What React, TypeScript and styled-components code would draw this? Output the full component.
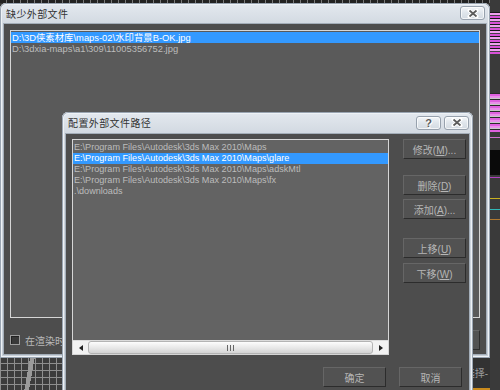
import React from 'react';
import styled, { createGlobalStyle } from 'styled-components';

const GlobalStyle = createGlobalStyle`
	html, body {
		margin: 0;
		padding: 0;
	}
	body {
		width: 500px;
		height: 390px;
		overflow: hidden;
		background: #2e2e2e;
		font-family: 'Liberation Sans', 'Noto Sans CJK SC', sans-serif;
	}
`;

const Desktop = styled.div`
	position: relative;
	width: 500px;
	height: 390px;
	overflow: hidden;
	display: grid;
	grid-template-columns: 1fr 10px;
`;

const Viewport = styled.div`
	display: flex;
	flex-direction: column;
	background: #383838;
`;

const Ruler = styled.div`
	height: 3px;
	background: repeating-linear-gradient(90deg, #222 0 6px, #7a7a7a 6px 7px);
`;

const Scene = styled.div`
	flex: 1;
	display: flex;
	align-items: flex-end;
`;

const GridPatch = styled.div`
	width: 70px;
	height: 34px;
	background-color: #3c3c3c;
	background-image:
		linear-gradient(100deg, transparent 40%, #9a9a9a 40% 46%, transparent 46%),
		linear-gradient(#8e8e8e 1px, transparent 1px),
		linear-gradient(90deg, #8e8e8e 1px, transparent 1px);
	background-size: 100% 100%, 7px 7px, 7px 7px;
`;

const StatusArea = styled.div`
	flex: 1;
	height: 34px;
	box-sizing: border-box;
	display: flex;
	align-items: center;
	justify-content: flex-end;
	padding-right: 2px;
	background: #323232;
	border-bottom: 2px solid #c98a1c;
	font-size: 10px;
	color: #9a9a9a;
`;

const SidePanel = styled.div`
	background:
		linear-gradient(#d070d0 0 0) 0 137px / 10px 1px no-repeat,
		linear-gradient(#b040c0 0 0) 0 177px / 10px 1px no-repeat,
		linear-gradient(#c8b020 0 0) 0 198px / 10px 1px no-repeat,
		linear-gradient(#30b8b8 0 0) 0 209px / 10px 1px no-repeat,
		linear-gradient(#b07830 0 0) 0 219px / 10px 1px no-repeat,
		linear-gradient(#0a0a0a 0 0) 0 150px / 10px 25px no-repeat,
		repeating-linear-gradient(0deg, #e060e0 0 2px, #2a2a2a 2px 3px, #c8c8c8 3px 4px, #e890e8 4px 6px) 0 93px / 10px 39px no-repeat,
		repeating-linear-gradient(0deg, #d850d8 0 2px, #444 2px 3px, #f0a0f0 3px 5px, #181818 5px 6px) 0 12px / 10px 42px no-repeat,
		#3a3a3a;
`;

const Window = styled.div<{ $x: number; $y: number; $w: number; $h: number }>`
	position: absolute;
	left: ${(p) => p.$x}px;
	top: ${(p) => p.$y}px;
	width: ${(p) => p.$w}px;
	height: ${(p) => p.$h}px;
	box-sizing: border-box;
	display: flex;
	flex-direction: column;
	padding: 0 3px 3px;
	border-radius: 6px 6px 0 0;
	background: linear-gradient(#e4e9ef, #d3dae2 20px, #c6ced7);
	box-shadow: inset 0 0 0 1px #9aa5b2, inset 0 0 0 2px #eef2f6;
`;

const TitleBar = styled.div<{ $h: number }>`
	height: ${(p) => p.$h}px;
	flex-shrink: 0;
	display: flex;
	align-items: center;
	justify-content: space-between;
	padding-left: 3px;
`;

const TitleText = styled.span`
	font-size: 10px;
	letter-spacing: 0.4px;
	color: #333;
`;

const TitleButtons = styled.div<{ $right: number }>`
	display: flex;
	gap: 3px;
	margin-right: ${(p) => p.$right}px;
`;

const TitleButton = styled.div`
	width: 25px;
	height: 14px;
	box-sizing: border-box;
	display: flex;
	align-items: center;
	justify-content: center;
	border: 1px solid #97a1ad;
	border-radius: 3px;
	background: linear-gradient(#f3f6f9, #dfe5eb 50%, #d3dae2);
	box-shadow: inset 0 0 0 1px rgba(255, 255, 255, 0.7);
	font: bold 11px 'Liberation Sans', sans-serif;
	color: #5a5a5a;
	text-shadow: 0 0 1px #fff, 1px 1px 0 #fff;
`;

const DialogBody = styled.div<{ $pad: string }>`
	flex: 1;
	display: flex;
	flex-direction: column;
	padding: ${(p) => p.$pad};
	background: #4d4d4d;
	box-shadow: inset 0 0 0 1px #a3adb8;
`;

const ListBox = styled.div<{ $w: number; $h: number; $bg: string; $font: number }>`
	width: ${(p) => p.$w}px;
	height: ${(p) => p.$h}px;
	box-sizing: border-box;
	flex-shrink: 0;
	display: flex;
	flex-direction: column;
	border: 1px solid #d6d6d6;
	background: ${(p) => p.$bg};
	font-size: ${(p) => p.$font}px;
	overflow: hidden;
`;

const Rows = styled.div<{ $top: number }>`
	flex: 1;
	padding-top: ${(p) => p.$top}px;
`;

const ListRow = styled.div<{ $selected?: boolean }>`
	height: 11px;
	line-height: 11px;
	padding-left: 1px;
	white-space: nowrap;
	color: ${(p) => (p.$selected ? '#ffffff' : '#bcbcbc')};
	background: ${(p) => (p.$selected ? '#3399ff' : 'transparent')};
`;

const HScroll = styled.div`
	height: 13px;
	flex-shrink: 0;
	display: flex;
	background: #f2f2f2;
	border-top: 1px solid #dcdcdc;
`;

const ScrollArrow = styled.div`
	width: 15px;
	display: flex;
	align-items: center;
	justify-content: center;
`;

const ScrollThumb = styled.div`
	flex: 1;
	box-sizing: border-box;
	display: flex;
	align-items: center;
	justify-content: center;
	border: 1px solid #b4b4b4;
	border-radius: 3px;
	background: linear-gradient(#fdfdfd, #e9e9e9 50%, #d4d4d4);
`;

const Footer = styled.div`
	height: 20px;
	margin-top: 12px;
	display: flex;
	align-items: center;
	justify-content: space-between;
`;

const CheckLabel = styled.label`
	display: flex;
	align-items: center;
	gap: 5px;
	font-size: 10px;
	color: #b8b8b8;
	white-space: nowrap;
`;

const CheckBox = styled.span`
	width: 10px;
	height: 10px;
	box-sizing: border-box;
	border: 1px solid #9d9d9d;
	background: #383838;
	box-shadow: inset 1px 1px 0 #222;
`;

const MainRow = styled.div`
	display: flex;
	gap: 14px;
`;

const ButtonColumn = styled.div`
	width: 62px;
	display: flex;
	flex-direction: column;
`;

const Button = styled.button<{ $top?: number }>`
	width: 63px;
	height: 20px;
	margin: ${(p) => p.$top ?? 0}px 0 0;
	padding: 0;
	box-sizing: border-box;
	border: 1px solid;
	border-color: #666 #2c2c2c #2c2c2c #666;
	background: #525252;
	color: #b6b6b6;
	font-family: 'Liberation Sans', 'Noto Sans CJK SC', sans-serif;
	font-size: 10px;
`;

const Key = styled.span`
	text-decoration: underline;
`;

const BottomRow = styled.div`
	display: flex;
	justify-content: flex-end;
	gap: 13px;
	margin-top: 12px;
	padding-right: 3px;
`;

const CloseGlyph = () => (
	<svg width="12" height="9" viewBox="0 0 12 9">
		<path d="M2.5 1.5 L9.5 7.5 M9.5 1.5 L2.5 7.5" stroke="#fff" strokeWidth="4" strokeLinecap="round" />
		<path d="M2.5 1.5 L9.5 7.5 M9.5 1.5 L2.5 7.5" stroke="#5c5c5c" strokeWidth="1.8" />
	</svg>
);

const Arrow = ({ dir }: { dir: 'left' | 'right' }) => (
	<svg width="4" height="6" viewBox="0 0 4 6">
		<path d={dir === 'left' ? 'M4 0 L0 3 L4 6 Z' : 'M0 0 L4 3 L0 6 Z'} fill="#222" />
	</svg>
);

const Grip = () => (
	<svg width="7" height="6" viewBox="0 0 7 6">
		<path d="M0.5 0 V6 M3.5 0 V6 M6.5 0 V6" stroke="#666" strokeWidth="1" />
	</svg>
);

const missingFiles = [
	{ text: 'D:\\3D侠素材库\\maps-02\\水印背景B-OK.jpg', selected: true },
	{ text: 'D:\\3dxia-maps\\a1\\309\\11005356752.jpg', selected: false },
];

const mapPaths = [
	{ text: 'E:\\Program Files\\Autodesk\\3ds Max 2010\\Maps', selected: false },
	{ text: 'E:\\Program Files\\Autodesk\\3ds Max 2010\\Maps\\glare', selected: true },
	{ text: 'E:\\Program Files\\Autodesk\\3ds Max 2010\\Maps\\adskMtl', selected: false },
	{ text: 'E:\\Program Files\\Autodesk\\3ds Max 2010\\Maps\\fx', selected: false },
	{ text: '.\\downloads', selected: false },
];

const App = () => {
	return (
		<>
			<GlobalStyle />
			<Desktop>
				<Viewport>
					<Ruler />
					<Scene>
						<GridPatch />
						<StatusArea>选择-</StatusArea>
					</Scene>
				</Viewport>
				<SidePanel />

				<Window $x={0} $y={3} $w={490} $h={355}>
					<TitleBar $h={20}>
						<TitleText>缺少外部文件</TitleText>
						<TitleButtons $right={2}>
							<TitleButton>
								<CloseGlyph />
							</TitleButton>
						</TitleButtons>
					</TitleBar>
					<DialogBody $pad="7px 7px 5px 7px">
						<ListBox $w={470} $h={288} $bg="#5a5a5a" $font={9.4}>
							<Rows $top={1}>
								{missingFiles.map((row) => (
									<ListRow key={row.text} $selected={row.selected}>
										{row.text}
									</ListRow>
								))}
							</Rows>
						</ListBox>
						<Footer>
							<CheckLabel>
								<CheckBox />
								在渲染时不再显示此消息
							</CheckLabel>
							<Button>继续</Button>
						</Footer>
					</DialogBody>
				</Window>

				<Window $x={62} $y={112} $w={411} $h={300}>
					<TitleBar $h={21}>
						<TitleText>配置外部文件路径</TitleText>
						<TitleButtons $right={1}>
							<TitleButton>?</TitleButton>
							<TitleButton>
								<CloseGlyph />
							</TitleButton>
						</TitleButtons>
					</TitleBar>
					<DialogBody $pad="6px 5px 0 7px">
						<MainRow>
							<ListBox $w={317} $h={216} $bg="#636363" $font={9.1}>
								<Rows $top={2}>
									{mapPaths.map((row) => (
										<ListRow key={row.text} $selected={row.selected}>
											{row.text}
										</ListRow>
									))}
								</Rows>
								<HScroll>
									<ScrollArrow>
										<Arrow dir="left" />
									</ScrollArrow>
									<ScrollThumb>
										<Grip />
									</ScrollThumb>
									<ScrollArrow>
										<Arrow dir="right" />
									</ScrollArrow>
								</HScroll>
							</ListBox>
							<ButtonColumn>
								<Button>
									修改(<Key>M</Key>)...
								</Button>
								<Button $top={16}>
									删除(<Key>D</Key>)
								</Button>
								<Button $top={4}>
									添加(<Key>A</Key>)...
								</Button>
								<Button $top={19}>
									上移(<Key>U</Key>)
								</Button>
								<Button $top={5}>
									下移(<Key>W</Key>)
								</Button>
							</ButtonColumn>
						</MainRow>
						<BottomRow>
							<Button>确定</Button>
							<Button>取消</Button>
						</BottomRow>
					</DialogBody>
				</Window>
			</Desktop>
		</>
	);
};

export default App;
